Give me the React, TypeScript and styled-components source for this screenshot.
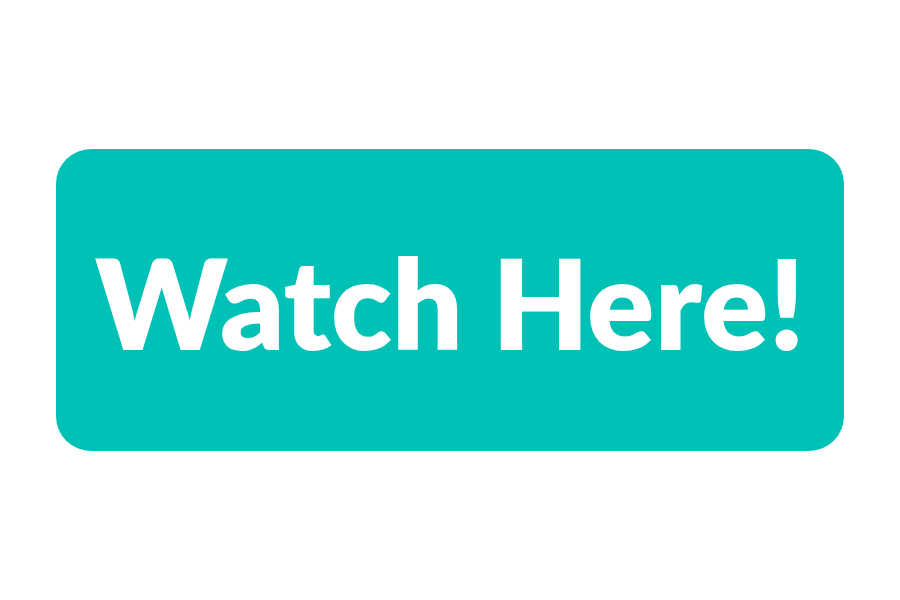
import React from 'react'
import styled, { createGlobalStyle } from 'styled-components'

const GlobalStyle = createGlobalStyle`
    body {
        margin: 0;
        background-color: #ffffff;
    }
`

const PageContainer = styled.main`
    box-sizing: border-box;
    display: flex;
    align-items: center;
    justify-content: center;
    min-height: 100vh;
    padding: 24px 56px;
`

const WatchButton = styled.button`
    flex: 1;
    padding: 74px 24px 70px;
    border: none;
    border-radius: 35px;
    background-color: #00c1b6;
    color: #ffffff;
    font-family: Lato, 'Liberation Sans', sans-serif;
    font-size: 125px;
    font-weight: 800;
    line-height: 158px;
    text-align: center;
    white-space: nowrap;
    cursor: pointer;
`

function App() {
    return (
        <>
            <GlobalStyle />
            <PageContainer>
                <WatchButton type="button">Watch Here!</WatchButton>
            </PageContainer>
        </>
    )
}

export default App
